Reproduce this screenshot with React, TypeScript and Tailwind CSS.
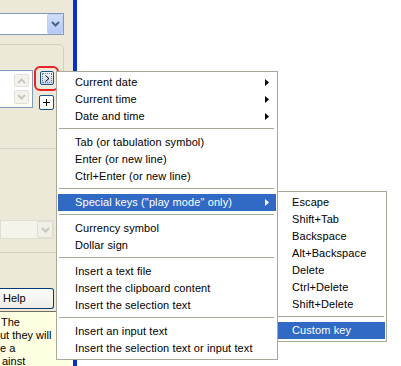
const mainItems: (string | null)[] = [
  "Current date>",
  "Current time>",
  "Date and time>",
  null,
  "Tab (or tabulation symbol)",
  "Enter (or new line)",
  "Ctrl+Enter (or new line)",
  null,
  "*Special keys (\"play mode\" only)>",
  null,
  "Currency symbol",
  "Dollar sign",
  null,
  "Insert a text file",
  "Insert the clipboard content",
  "Insert the selection text",
  null,
  "Insert an input text",
  "Insert the selection text or input text",
]

const subItems: (string | null)[] = [
  "Escape",
  "Shift+Tab",
  "Backspace",
  "Alt+Backspace",
  "Delete",
  "Ctrl+Delete",
  "Shift+Delete",
  null,
  "*Custom key",
]

const font = { fontFamily: '"Liberation Sans", Arial, sans-serif' }

const MenuItem = ({ raw, pad }: { raw: string; pad: string }) => {
  const active = raw.startsWith("*")
  const sub = raw.endsWith(">")
  const label = raw.replace(/^\*/, "").replace(/>$/, "")
  return (
    <div
      className={`flex items-center h-[17px] leading-[17px] ${pad} pr-[7px] text-[11px] tracking-[0.1px] whitespace-nowrap ${
        active ? "bg-[#316AC5] text-white" : "text-black"
      }`}
    >
      <span className="flex-1">{label}</span>
      {sub && (
        <svg width="4" height="7" viewBox="0 0 4 7">
          <polygon points="0,0 4,3.5 0,7" fill={active ? "#fff" : "#000"} />
        </svg>
      )}
    </div>
  )
}

const Chevron = ({ color }: { color: string }) => (
  <svg width="9" height="6" viewBox="0 0 9 6">
    <polyline points="1,1 4.5,4.5 8,1" fill="none" stroke={color} strokeWidth="2" />
  </svg>
)

export default function App() {
  return (
    <div className="relative w-[401px] h-[366px] overflow-hidden bg-white flex" style={font}>
      {/* left dialog area */}
      <div className="w-[73px] h-full bg-[#ECE9D8] flex flex-col pt-[13px] overflow-hidden">
        <div className="shrink-0 w-[64px] h-[22px] bg-white border-y border-r border-[#7F9DB9] flex justify-end items-stretch">
          <div className="w-[16px] rounded-[2px] bg-gradient-to-b from-[#D2DEFB] to-[#B4C8F6] border border-[#B9CDF5] flex items-center justify-center">
            <Chevron color="#4D6185" />
          </div>
        </div>

        <div className="shrink-0 mt-[9px] w-[64px] h-[209px] border-t border-r border-b border-[#D0D0BF] rounded-tr-[5px] flex flex-col pt-[25px]">
          <div className="flex h-[40px] shrink-0">
            <div className="w-[33px] h-[38px] bg-white border-y border-r border-[#7F9DB9] flex flex-col pl-[14px] pt-[3px] gap-[3px]">
              <div className="w-[15px] h-[13px] border border-[#E3E1D6] rounded-[2px] bg-[#F4F3EE] flex items-center justify-center">
                <svg width="9" height="6" viewBox="0 0 9 6">
                  <polyline points="1,5 4.5,1.5 8,5" fill="none" stroke="#C9C7BA" strokeWidth="2" />
                </svg>
              </div>
              <div className="w-[15px] h-[14px] border border-[#E3E1D6] rounded-[2px] bg-[#F4F3EE] flex items-center justify-center">
                <Chevron color="#C9C7BA" />
              </div>
            </div>
            <div className="flex flex-col ml-[6px]">
              <div className="relative mt-[1px] ml-[1px] w-[14px] h-[14px] rounded-[2px] border border-[#1C5180] bg-gradient-to-b from-[#F4F6FB] to-[#C9D6EE] flex items-center justify-center">
                <div className="absolute inset-[1px] border border-dotted border-[#6A7C9A]" />
                <svg width="5" height="7" viewBox="0 0 5 7">
                  <polyline points="0.5,0.5 4,3.5 0.5,6.5" fill="none" stroke="#000" strokeWidth="1" />
                </svg>
              </div>
              <div className="mt-[10px] w-[15px] h-[15px] rounded-[2px] border border-[#1C5180] bg-white flex items-center justify-center">
                <svg width="7" height="7" viewBox="0 0 7 7">
                  <path d="M3.5 0 V7 M0 3.5 H7" stroke="#000" strokeWidth="1" />
                </svg>
              </div>
            </div>
          </div>
          <div className="shrink-0 mt-[38px] h-[1px] bg-[#D8D6C8]" />
          <div className="shrink-0 mt-[71px] w-[54px] h-[19px] bg-[#F5F4EA] border border-[#E0DED2] flex justify-end">
            <div className="w-[16px] h-full rounded-[2px] bg-[#F0EFE8] border border-[#E0DED2] flex items-center justify-center">
              <Chevron color="#C9C7BA" />
            </div>
          </div>
        </div>

        <div className="shrink-0 mt-[35px] w-[54px] h-[21px] rounded-r-[3px] border-y border-r border-[#003C74] bg-gradient-to-b from-white to-[#ECEBE6] flex items-center pl-[3px] text-[11px] text-black">
          Help
        </div>

        <div className="shrink-0 mt-[2px] h-[60px] border-t border-[#716F64] bg-[#FFFFE1] pt-[4px] text-[11px] leading-[13px] text-black whitespace-pre">
          <div className="pl-[1px]">The</div>
          <div>ut they will</div>
          <div>e a</div>
          <div className="pl-[2px]">ainst</div>
        </div>
      </div>

      {/* window frame edge */}
      <div className="w-[4px] h-full bg-[#0A2FCF]" />
      <div className="flex-1 h-full bg-white" />

      {/* red annotation ring */}
      <div className="absolute left-[34px] top-[66px] w-[25px] h-[25px] rounded-[6px] border-2 border-[#F02028]" />

      {/* main popup menu */}
      <div className="absolute left-[56px] top-[71px] w-[222px] bg-white border border-[#ACA899] px-[1px] pt-[2px] pb-[2px]">
        {mainItems.map((raw, i) =>
          raw === null ? (
            <div key={i} className="h-[9px] pt-[3px] pl-[1px] pr-[2px]">
              <div className="h-[1px] bg-[#ACA899]" />
            </div>
          ) : (
            <MenuItem key={i} raw={raw} pad="pl-[17px]" />
          )
        )}
      </div>

      {/* submenu */}
      <div className="absolute left-[277px] top-[191px] w-[110px] bg-white border border-[#ACA899] pl-0 pr-[1px] pt-[2px] pb-[2px]">
        {subItems.map((raw, i) =>
          raw === null ? (
            <div key={i} className="h-[9px] pt-[3px] pr-[1px]">
              <div className="h-[1px] bg-[#ACA899]" />
            </div>
          ) : (
            <MenuItem key={i} raw={raw} pad="pl-[14px]" />
          )
        )}
      </div>
    </div>
  )
}
